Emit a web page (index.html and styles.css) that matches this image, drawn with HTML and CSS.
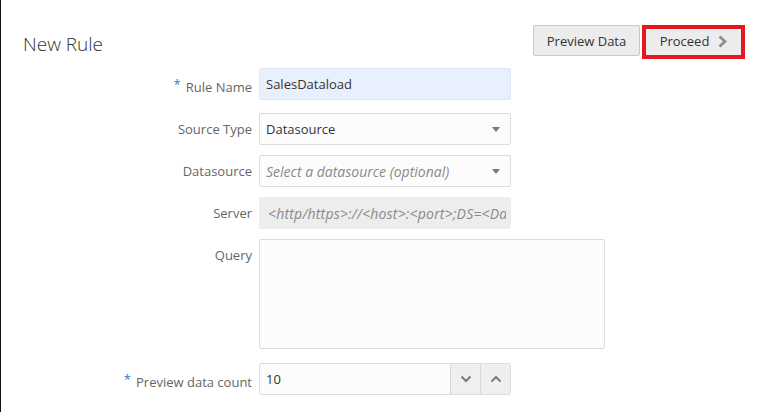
FILE: index.html
```html
<!DOCTYPE html>
<html lang="en">
<head>
<meta charset="utf-8">
<title>New Rule</title>
<link rel="stylesheet" href="styles.css">
</head>
<body>
<div class="page">
  <header class="head">
    <h1 class="title">New Rule</h1>
    <div class="actions">
      <button class="btn">Preview Data</button>
      <button class="btn btn-proceed">Proceed <svg class="chev" width="9" height="13" viewBox="0 0 9 13"><path d="M1.5 1.5 L7 6.5 L1.5 11.5" fill="none" stroke="#8c8c8c" stroke-width="2.6"/></svg></button>
    </div>
  </header>
  <div class="form">
    <label class="lbl"><span class="req">*</span>Rule Name</label>
    <div class="field field-auto"><span class="val">SalesDataload</span></div>

    <label class="lbl">Source Type</label>
    <div class="field select"><span class="val">Datasource</span><span class="caret"></span></div>

    <label class="lbl">Datasource</label>
    <div class="field select"><span class="ph">Select a datasource (optional)</span><span class="caret"></span></div>

    <label class="lbl">Server</label>
    <div class="field disabled"><span class="ph clip">&lt;http/https&gt;://&lt;host&gt;:&lt;port&gt;;DS=&lt;DatasourceName&gt;</span></div>

    <label class="lbl top">Query</label>
    <div class="field area"></div>

    <label class="lbl count"><span class="req">*</span>Preview data count</label>
    <div class="field spin count"><span class="val">10</span>
      <span class="sbtn"><svg width="12" height="8" viewBox="0 0 12 8"><path d="M1.5 1.5 L6 6 L10.5 1.5" fill="none" stroke="#6f7f8f" stroke-width="2"/></svg></span>
      <span class="sbtn"><svg width="12" height="8" viewBox="0 0 12 8"><path d="M1.5 6.5 L6 2 L10.5 6.5" fill="none" stroke="#6f7f8f" stroke-width="2"/></svg></span>
    </div>
  </div>
</div>
</body>
</html>
```
FILE: styles.css
```css
html, body {
  margin: 0;
  padding: 0;
  background: #fff;
}
body {
  font-family: "Open Sans", "Noto Sans", sans-serif;
  font-size: 13px;
  color: #333;
}
.page {
  border-left: 1px solid #111;
  height: 412px;
  box-sizing: border-box;
}
.head {
  display: flex;
  justify-content: space-between;
  align-items: flex-start;
  padding: 25px 16px 0 22px;
}
.title {
  margin: 6px 0 0;
  font-size: 19px;
  font-weight: 300;
  color: #333;
}
.actions {
  display: flex;
  gap: 2px;
}
.btn {
  font-family: inherit;
  font-size: 13px;
  color: #333;
  background: #ececec;
  border: 1px solid #c8c8c8;
  border-radius: 2px;
  height: 31px;
  padding: 0 12px;
  box-sizing: border-box;
  width: 107px;
}
.btn-proceed {
  width: 103px;
  height: 34px;
  border: 4px solid #e8141e;
  border-radius: 0;
  display: flex;
  align-items: center;
  justify-content: center;
  gap: 9px;
  padding: 0 0 2px 0;
}
.chev { display: block; }
.form {
  display: grid;
  grid-template-columns: 251px 252px 87px;
  column-gap: 7px;
  row-gap: 10px;
  margin-top: 12px;
  margin-top: 9px;
}
.lbl {
  grid-column: 1;
  text-align: right;
  line-height: 32px;
  color: #666;
  font-size: 13px;
}
.req {
  color: #2a7bcc;
  margin-right: 5px;
  vertical-align: 3px;
  font-size: 13px;
}
.field {
  grid-column: 2;
  height: 32px;
  box-sizing: border-box;
  border: 1px solid #dcdcdc;
  border-radius: 2px;
  background: #fcfcfc;
  display: flex;
  align-items: center;
  padding: 0 6px;
  font-size: 13px;
  color: #333;
  min-width: 0;
}
.field-auto {
  background: #e8f0fe;
  border-color: #dfe6f2;
}
.caret {
  margin-left: auto;
  margin-right: 4px;
  width: 0;
  height: 0;
  border-left: 4px solid transparent;
  border-right: 4px solid transparent;
  border-top: 5px solid #7a7a7a;
  flex-shrink: 0;
}
.ph {
  font-style: italic;
  font-size: 14px;
  color: #8a8a8a;
}
.disabled {
  background: #ededed;
  border-color: #ededed;
  overflow: hidden;
  padding-left: 8px;
  padding-right: 4px;
}
.clip {
  white-space: nowrap;
  overflow: hidden;
  letter-spacing: 0.2px;
}
.area {
  grid-column: 2 / 4;
  height: 110px;
}
.lbl.top { align-self: start; }
.count { margin-top: 4px; }
.spin {
  padding-right: 0;
}
.spin .val { flex: 1; }
.sbtn {
  width: 29px;
  height: 30px;
  background: #efefef;
  border-left: 1px solid #d8d8d8;
  display: flex;
  align-items: center;
  justify-content: center;
}
.sbtn svg { display: block; }
```
